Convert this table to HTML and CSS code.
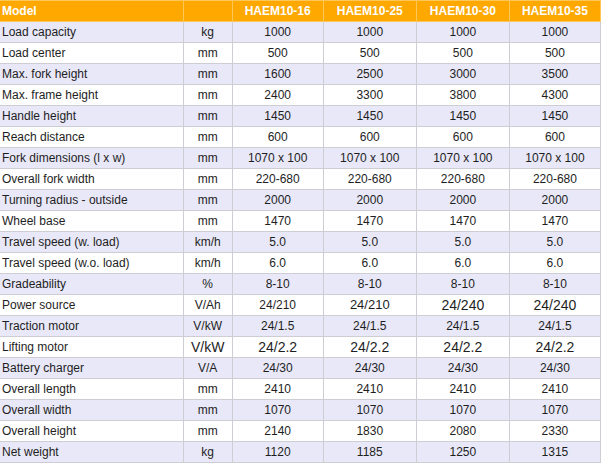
FILE: index.html
```html
<!DOCTYPE html>
<html>
<head>
<meta charset="utf-8">
<link rel="stylesheet" href="styles.css">
</head>
<body>
<table class="spec">
  <colgroup>
    <col class="c-name"><col class="c-unit"><col class="c-a"><col class="c-b"><col class="c-b"><col class="c-a">
  </colgroup>
  <thead>
    <tr><th class="name">Model</th><th></th><th>HAEM10-16</th><th>HAEM10-25</th><th>HAEM10-30</th><th>HAEM10-35</th></tr>
  </thead>
  <tbody>
    <tr><td class="name">Load capacity</td><td>kg</td><td>1000</td><td>1000</td><td>1000</td><td>1000</td></tr>
    <tr><td class="name">Load center</td><td>mm</td><td>500</td><td>500</td><td>500</td><td>500</td></tr>
    <tr><td class="name">Max. fork height</td><td>mm</td><td>1600</td><td>2500</td><td>3000</td><td>3500</td></tr>
    <tr><td class="name">Max. frame height</td><td>mm</td><td>2400</td><td>3300</td><td>3800</td><td>4300</td></tr>
    <tr><td class="name">Handle height</td><td>mm</td><td>1450</td><td>1450</td><td>1450</td><td>1450</td></tr>
    <tr><td class="name">Reach distance</td><td>mm</td><td>600</td><td>600</td><td>600</td><td>600</td></tr>
    <tr><td class="name">Fork dimensions (l x w)</td><td>mm</td><td>1070 x 100</td><td>1070 x 100</td><td>1070 x 100</td><td>1070 x 100</td></tr>
    <tr><td class="name">Overall fork width</td><td>mm</td><td>220-680</td><td>220-680</td><td>220-680</td><td>220-680</td></tr>
    <tr><td class="name">Turning radius - outside</td><td>mm</td><td>2000</td><td>2000</td><td>2000</td><td>2000</td></tr>
    <tr><td class="name">Wheel base</td><td>mm</td><td>1470</td><td>1470</td><td>1470</td><td>1470</td></tr>
    <tr><td class="name">Travel speed (w. load)</td><td>km/h</td><td>5.0</td><td>5.0</td><td>5.0</td><td>5.0</td></tr>
    <tr><td class="name">Travel speed (w.o. load)</td><td>km/h</td><td>6.0</td><td>6.0</td><td>6.0</td><td>6.0</td></tr>
    <tr><td class="name">Gradeability</td><td>%</td><td>8-10</td><td>8-10</td><td>8-10</td><td>8-10</td></tr>
    <tr><td class="name">Power source</td><td>V/Ah</td><td>24/210</td><td class="mid">24/210</td><td class="big">24/240</td><td class="big">24/240</td></tr>
    <tr><td class="name">Traction motor</td><td>V/kW</td><td>24/1.5</td><td>24/1.5</td><td>24/1.5</td><td>24/1.5</td></tr>
    <tr><td class="name">Lifting motor</td><td class="big">V/kW</td><td class="big">24/2.2</td><td class="big">24/2.2</td><td class="big">24/2.2</td><td class="big">24/2.2</td></tr>
    <tr><td class="name">Battery charger</td><td>V/A</td><td>24/30</td><td>24/30</td><td>24/30</td><td>24/30</td></tr>
    <tr><td class="name">Overall length</td><td>mm</td><td>2410</td><td>2410</td><td>2410</td><td>2410</td></tr>
    <tr><td class="name">Overall width</td><td>mm</td><td>1070</td><td>1070</td><td>1070</td><td>1070</td></tr>
    <tr><td class="name">Overall height</td><td>mm</td><td>2140</td><td>1830</td><td>2080</td><td>2330</td></tr>
    <tr><td class="name">Net weight</td><td>kg</td><td>1120</td><td>1185</td><td>1250</td><td>1315</td></tr>
  </tbody>
</table>
</body>
</html>
```
FILE: styles.css
```css
html, body {
  margin: 0;
  padding: 0;
  background: #ffffff;
}

.spec {
  border-collapse: collapse;
  table-layout: fixed;
  width: 601px;
  font-family: "Liberation Sans", Arial, sans-serif;
  font-size: 12px;
  color: #1e1e1e;
}

.c-name { width: 183px; }
.c-unit { width: 49px; }
.c-a { width: 91px; }
.c-b { width: 93px; }

.spec th,
.spec td {
  height: 20px;
  padding: 0 2px;
  line-height: 20px;
  text-align: center;
  white-space: nowrap;
  overflow: hidden;
  border: 1px solid #cdcdd3;
}

.spec th {
  background: #ffa800;
  color: #ffffff;
  font-weight: bold;
  border-color: #ffc658;
}

.spec tr > :first-child {
  border-left: none;
}

.spec .name {
  text-align: left;
  padding-left: 2px;
}

.spec tbody tr:nth-child(odd) td {
  background: #e8e8f8;
}

.spec tbody tr:nth-child(even) td {
  background: #ffffff;
}

.spec .mid { font-size: 13px; }
.spec .big { font-size: 14px; }
```
